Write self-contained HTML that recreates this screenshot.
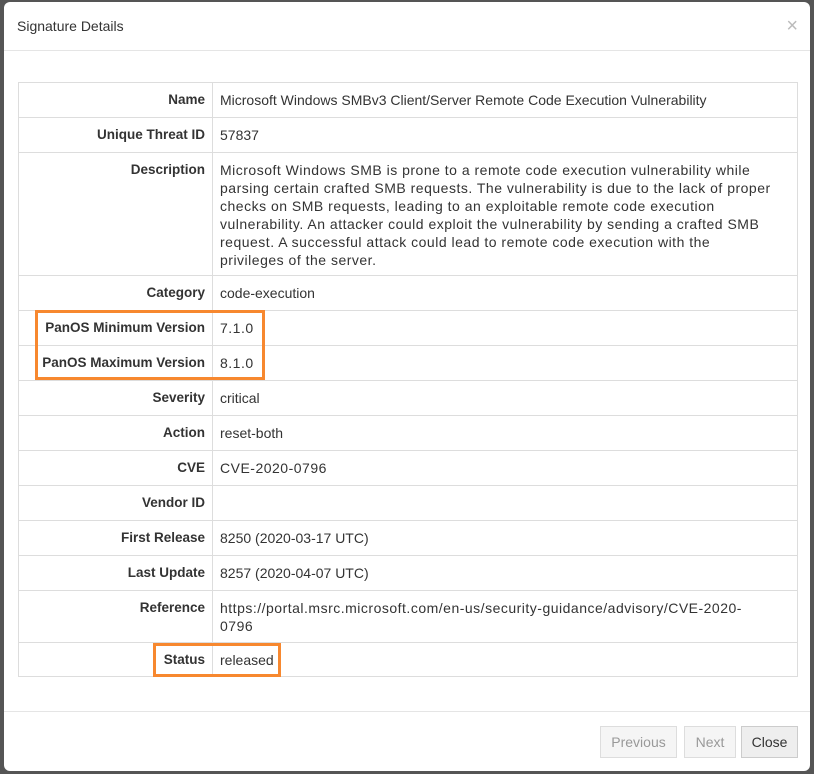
<!DOCTYPE html>
<html><head><style>
*{box-sizing:border-box;margin:0;padding:0}
body{width:814px;height:774px;background:#555;font-family:"Liberation Sans",sans-serif;color:#333;position:relative;overflow:hidden}
.m{position:absolute;left:4px;top:2px;width:806px;height:769px;background:#fff;border-radius:6px}
.h{height:49px;border-bottom:1px solid #e5e5e5;padding:16px 13px;font-size:14px;position:relative}
.x{position:absolute;right:12px;top:13px;font-size:20px;color:#bbb}
table{position:absolute;left:14px;top:80px;width:780px;border-collapse:collapse;font-size:14px}
tr{height:35px}
td{border:1px solid #ddd;padding:8px 7px 0;vertical-align:top;line-height:18px}
td.l{width:194px;text-align:right;font-weight:bold;font-size:13.5px}
td.v{font-size:14px}
.big{font-size:14.6px;letter-spacing:0.5px}
.f{position:absolute;top:709px;left:0;right:0;border-top:1px solid #e5e5e5}
.b{position:absolute;top:724px;height:32px;border:1px solid #ddd;background:#f5f5f5;color:#999;font-size:14px;line-height:30px;text-align:center}
.o{position:absolute;border:3px solid #f7882f}
</style></head><body>
<div class="m">
<div class="h">Signature Details<span class="x">×</span></div>
<table>
<tr><td class="l">Name</td><td class="v">Microsoft Windows SMBv3 Client/Server Remote Code Execution Vulnerability</td></tr>
<tr><td class="l">Unique Threat ID</td><td class="v">57837</td></tr>
<tr style="height:123px"><td class="l">Description</td><td class="v big">Microsoft Windows SMB is prone to a remote code execution vulnerability while<br>parsing certain crafted SMB requests. The vulnerability is due to the lack of proper<br>checks on SMB requests, leading to an exploitable remote code execution<br>vulnerability. An attacker could exploit the vulnerability by sending a crafted SMB<br>request. A successful attack could lead to remote code execution with the<br>privileges of the server.</td></tr>
<tr><td class="l">Category</td><td class="v">code-execution</td></tr>
<tr><td class="l">PanOS Minimum Version</td><td class="v big">7.1.0</td></tr>
<tr><td class="l">PanOS Maximum Version</td><td class="v big">8.1.0</td></tr>
<tr><td class="l">Severity</td><td class="v">critical</td></tr>
<tr><td class="l">Action</td><td class="v">reset-both</td></tr>
<tr><td class="l">CVE</td><td class="v big">CVE-2020-0796</td></tr>
<tr><td class="l">Vendor ID</td><td class="v">&nbsp;</td></tr>
<tr><td class="l">First Release</td><td class="v">8250 (2020-03-17 UTC)</td></tr>
<tr><td class="l">Last Update</td><td class="v">8257 (2020-04-07 UTC)</td></tr>
<tr style="height:52px"><td class="l">Reference</td><td class="v big">https://portal.msrc.microsoft.com/en-us/security-guidance/advisory/CVE-2020-<br>0796</td></tr>
<tr style="height:34px"><td class="l">Status</td><td class="v">released</td></tr>
</table>
<div class="o" style="left:31px;top:308px;width:230px;height:70px"></div>
<div class="o" style="left:149px;top:641px;width:128px;height:34px"></div>
<div class="f"></div>
<div class="b" style="left:596px;width:77px">Previous</div>
<div class="b" style="left:680px;width:52px">Next</div>
<div class="b" style="left:737px;width:57px;background:#eee;border-color:#ccc;color:#333">Close</div>
</div>
</body></html>
